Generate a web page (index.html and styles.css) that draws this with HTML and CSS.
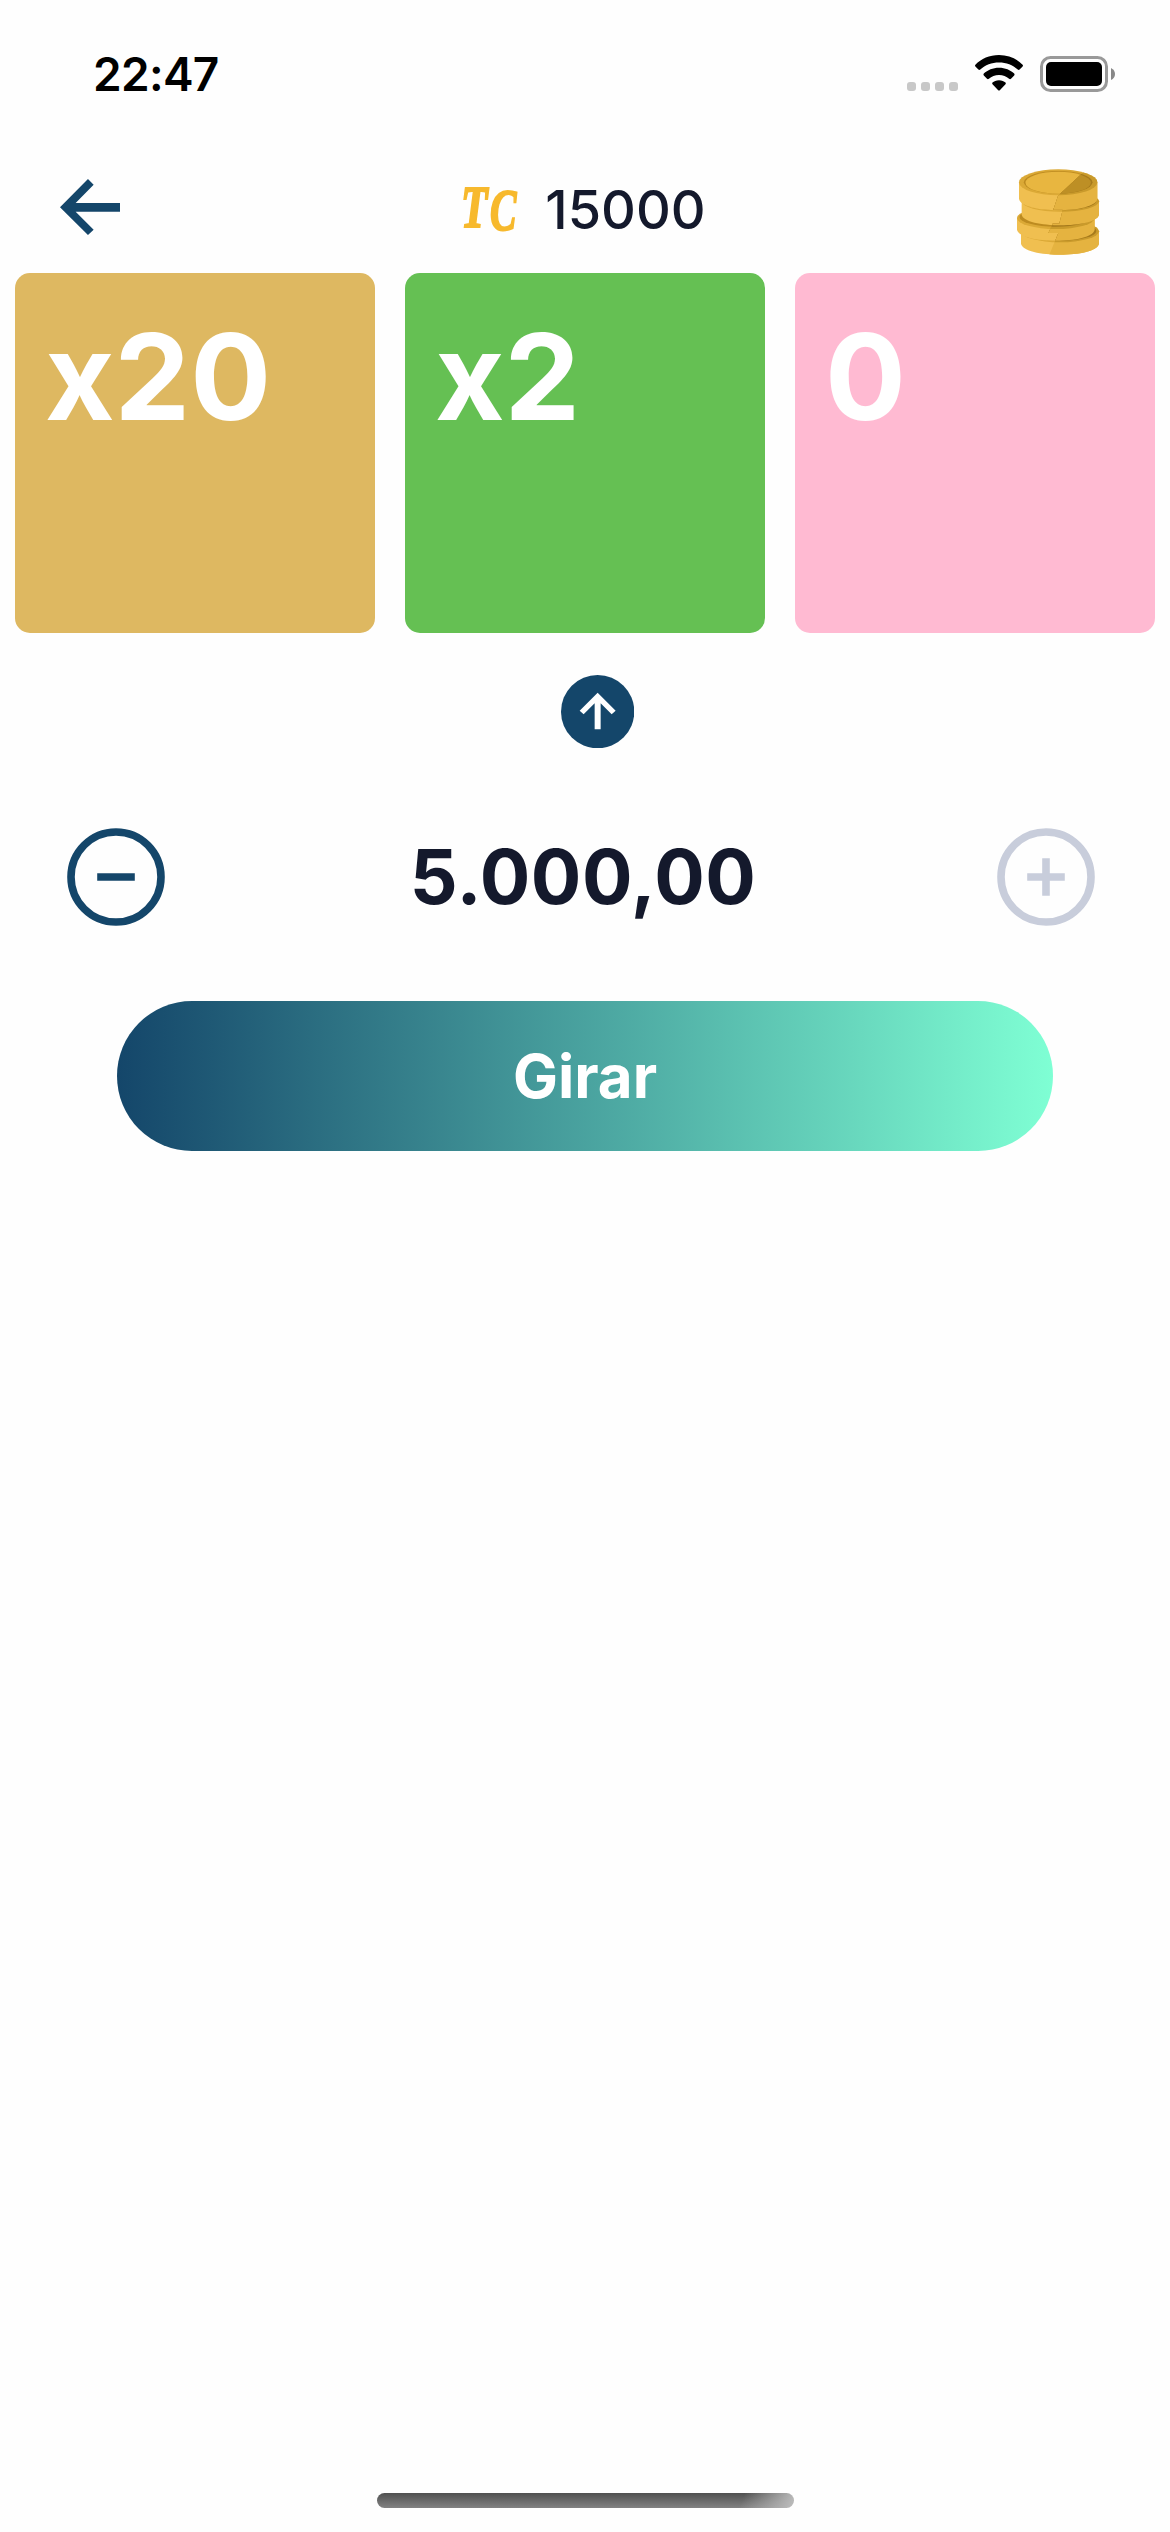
FILE: index.html
```html
<!DOCTYPE html>
<html lang="es">
<head>
<meta charset="utf-8">
<title>Girar</title>
<link rel="stylesheet" href="styles.css">
</head>
<body>
<div class="screen">
  <div class="status">
    <span class="time">22:47</span>
    <div class="indicators">
      <span class="signal"><i></i><i></i><i></i><i></i></span>
      <svg class="wifi" viewBox="0 0 48 36"><path d="M24 0C33.500 0 41.800 3.700 47.600 9.700Q48.400 10.600 47.600 11.500L44.600 14.600Q43.700 15.500 42.700 14.600C37.800 9.900 31.300 7.500 24 7.500S10.200 9.900 5.300 14.600Q4.300 15.500 3.400 14.600L.4 11.500Q-.4 10.600 .4 9.700C6.200 3.700 14.500 0 24 0Z"/><path d="M24 12.700C30.200 12.700 35.400 15 39.200 18.600Q40 19.500 39.200 20.400L36 23.700Q35.100 24.600 34.100 23.700C31.400 21.300 28 19.900 24 19.900S16.600 21.300 13.900 23.700Q12.900 24.600 12 23.700L8.800 20.400Q8 19.500 8.800 18.600C12.600 15 17.800 12.700 24 12.700Z"/><path d="M24 25.200C26.800 25.200 29 26.100 30.500 27.600Q31.300 28.400 30.500 29.200L24.800 35.200Q24 36 23.200 35.200L17.500 29.200Q16.700 28.400 17.500 27.600C19 26.100 21.200 25.200 24 25.200Z"/></svg>
      <svg class="battery" viewBox="0 0 75 36"><rect x="1.500" y="1.500" width="65" height="33" rx="9" fill="none" stroke="#999" stroke-width="3"/><rect x="6" y="6" width="56" height="24" rx="5"/><path d="M71 12Q75 14 75 18T71 24Z" fill="#888"/></svg>
    </div>
  </div>
  <header class="header">
    <svg class="back" viewBox="0 0 181 168"><path d="M0 85 84 0 101 17 47 72H181V98H47L101 152 84 168Z"/></svg>
    <div class="balance"><span class="coin-mark"><b class="t">T</b><b class="c">C</b></span><span class="points">15000</span></div>
    <svg class="coins" viewBox="78 58 252 260">
      <defs>
        <clipPath id="shade"><path d="M290 58H340V320H176L205 250L175 250L188 222L208 222L218 180L190 180L204 138Z"/></clipPath>
        <g id="stack">
          <path class="side" d="M93 245V282C101 326 319 326 327 282V245Z"/><ellipse class="top" cx="210" cy="245" rx="117" ry="33"/>
          <ellipse class="edge" cx="210" cy="244" rx="109" ry="29"/>
          <path class="side" d="M81 205V240C89 284 306 284 314 240V205Z"/><ellipse class="top" cx="197.500" cy="205" rx="116.500" ry="33"/>
          <ellipse class="edge" cx="197.500" cy="202" rx="109" ry="29"/>
          <path class="side" d="M95 155V195C103 237 319 237 327 195V155Z"/><ellipse class="top" cx="211" cy="155" rx="116" ry="31"/>
          <ellipse class="edge" cx="210" cy="153" rx="109" ry="29"/>
          <path class="side" d="M87 100V147C94 193 315 193 322 147V100Z"/><ellipse class="top" cx="204.500" cy="98" rx="117.500" ry="39"/>
          <ellipse class="edge" cx="204.500" cy="98" rx="103" ry="34"/><ellipse class="face" cx="204.500" cy="99" rx="98" ry="33"/>
        </g>
      </defs>
      <use href="#stack" class="light"/>
      <g clip-path="url(#shade)"><use href="#stack" class="dark"/></g>
    </svg>
  </header>
  <div class="cards">
    <div class="card gold">x20</div>
    <div class="card green">x2</div>
    <div class="card pink">0</div>
  </div>
  <div class="pointer">
    <svg viewBox="-110 -110 220 220"><circle r="110"/><path d="M0-57 54-3 42 8 9-25V53H-9V-25L-42 8-54-3Z" fill="#fff"/></svg>
  </div>
  <div class="bet">
    <svg class="minus" viewBox="-49 -49 98 98"><circle r="45"/><path d="M-18.800 0H18.800"/></svg>
    <span class="amount">5.000,00</span>
    <svg class="plus" viewBox="-49 -49 98 98"><circle r="45"/><path d="M-18.800 0H18.800M0-18.800V18.800"/></svg>
  </div>
  <button class="spin">Girar</button>
  <div class="home"></div>
</div>
</body>
</html>
```
FILE: styles.css
```css
* { box-sizing: border-box; }
body { margin: 0; background: #fefefe; }
.screen {
  width: 1170px;
  height: 2532px;
  display: flex;
  flex-direction: column;
  background: #fefefe;
  color: #14192c;
  font-family: Inter, sans-serif;
}
svg { display: block; flex: none; }
.status {
  height: 132px;
  padding: 55px 55px 0 93px;
  display: flex;
  justify-content: space-between;
  align-items: flex-start;
  color: #000;
}
.time { font-size: 46px; font-weight: 600; line-height: 38px; letter-spacing: -0.7px; }
.indicators { display: flex; align-items: flex-start; }
.signal { display: flex; gap: 5px; margin: 27px 17px 0 0; }
.signal i { width: 9px; height: 9px; border-radius: 3px; background: #c8c8c8; }
.wifi { width: 48px; height: 36px; margin-right: 17px; }
.battery { width: 75px; height: 36px; margin-top: 1px; }
.header {
  height: 141px;
  padding: 0 70px 0 60px;
  display: grid;
  grid-template-columns: 1fr auto 1fr;
  align-items: start;
}
.back { width: 60.3px; height: 56px; margin-top: 47px; fill: #14466a; }
.balance { display: flex; align-items: flex-start; margin-top: 45px; }
.coin-mark {
  display: flex;
  width: 84px;
  color: #f7b92d;
  font: italic bold 60px/60px "Liberation Serif", serif;
  -webkit-text-stroke: 2px #f7b92d;
}
.t, .c { display: block; width: 27px; transform-origin: 0 50%; }
.t { transform: scaleX(.72); }
.c { transform: translate(2px, 3px) scaleX(.66); }
.points { margin-right: -7px; font-size: 54px; line-height: 66px; font-weight: 500; }
.coins { width: 84px; height: 86.7px; margin-top: 37px; justify-self: end; }
.light { --side: #f0bf50; --top: #dba936; --edge: #bd8b20; --face: #e8b640; }
.dark { --side: #e5b340; --top: #c99a2b; --edge: #a67a1c; --face: #bd8f25; }
.side { fill: var(--side); }
.top { fill: var(--top); }
.edge { fill: var(--edge); }
.face { fill: var(--face); }
.cards {
  display: grid;
  grid-template-columns: repeat(3, 360px);
  gap: 30px;
  padding: 0 15px;
}
.card {
  height: 360px;
  padding: 30px;
  border-radius: 15px;
  color: #fff;
  font-size: 120px;
  font-weight: 700;
  line-height: 147px;
}
.gold { background: #deb861; }
.green { background: #65c053; }
.pink { background: #ffbad2; }
.pointer {
  height: 195px;
  padding: 41.5px 0 0 560.500px;
}
.pointer svg { width: 73.300px; height: 73.300px; fill: #14466a; }
.bet {
  height: 98px;
  padding: 0 75px 0 67px;
  display: flex;
  justify-content: space-between;
  align-items: center;
}
.bet svg { width: 98px; height: 98px; fill: none; stroke-width: 7.600px; }
.minus { stroke: #14466a; }
.plus { stroke: #c8cddb; }
.amount { margin-left: 4px; font-size: 75px; font-weight: 700; line-height: 90px; letter-spacing: 0.5px; }
.spin {
  align-self: center;
  width: 936px;
  height: 150px;
  margin-top: 75px;
  padding: 0;
  border: 0;
  border-radius: 75px;
  background: linear-gradient(90deg, #14466a, #7fffd4);
  color: #fff;
  font: 700 60px/73px Inter, sans-serif;
}
.home {
  align-self: center;
  width: 417px;
  height: 15px;
  margin: auto 0 24px;
  border-radius: 8px;
  background:
    linear-gradient(110deg, transparent 87%, #b8b8b8 99%),
    linear-gradient(#505050, #828282);
}
```
